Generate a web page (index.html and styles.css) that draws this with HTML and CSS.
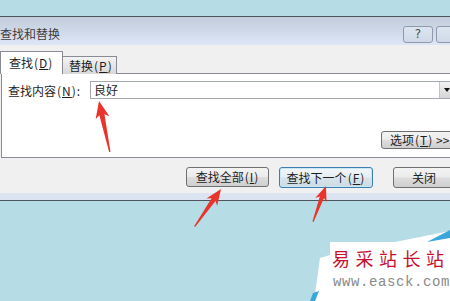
FILE: index.html
```html
<!DOCTYPE html>
<html lang="zh-CN">
  <head>
    <meta charset="UTF-8" />
    <title>查找和替换</title>
    <link rel="stylesheet" href="styles.css">
  </head>
  <body>
    <div class="desk-top"></div>

    <!-- Dialog -->
    <div class="dialog">
      <div class="titlebar">
        <div class="title">查找和替换</div>
        <div class="title-buttons">
          <span class="cap-btn">?</span>
          <span class="cap-btn"></span>
        </div>
      </div>

      <div class="dialog-body">
        <div class="tabs">
          <div class="tab active">查找<span class="key">(<u>D</u>)</span></div>
          <div class="tab">替换<span class="key">(<u>P</u>)</span></div>
        </div>

        <div class="panel">
          <div class="find-row">
            <label class="find-label">查找内容<span class="key">(<u>N</u>)</span>:</label>
            <div class="combo">
              <span class="combo-text">良好</span>
              <span class="combo-drop"></span>
            </div>
          </div>
          <div class="options-row">
            <button class="btn btn-options">选项<span class="key">(<u>T</u>)</span> &gt;&gt;</button>
          </div>
        </div>

        <div class="actions">
          <button class="btn btn-all">查找全部<span class="key">(<u>I</u>)</span></button>
          <button class="btn btn-next">查找下一个<span class="key">(<u>F</u>)</span></button>
          <button class="btn btn-close">关闭</button>
        </div>
      </div>
      <div class="dialog-foot"></div>
    </div>

    <!-- Red arrows drawn over the screenshot -->
    <svg class="arrows" width="450" height="301" viewBox="0 0 450 301">
      <g fill="#e8342b">
        <polygon transform="translate(99,101) rotate(-12)" points="0,0 7,17 2.6,14 0.7,52 -0.7,52 -2.6,14 -7,17" />
        <polygon transform="translate(221,189) rotate(35)" points="0,0 6.5,16 2.4,13 0.6,46 -0.6,46 -2.4,13 -6.5,16" />
        <polygon transform="translate(326,186) rotate(20)" points="0,0 6,15 2.2,12 0.6,38 -0.6,38 -2.2,12 -6,15" />
      </g>
    </svg>

    <!-- Site watermark -->
    <div class="watermark">
      <svg class="wm-shape" width="140" height="72" viewBox="0 0 140 72">
        <polygon points="10,29 20,26 20,13 85,13 140,2 140,72 4,72" fill="#ffffff" />
        <polygon points="117,13 140,1 140,9" fill="#3aa7db" />
        <polygon points="0,72 3,64 9,62 5,72" fill="#3aa7db" />
      </svg>
      <div class="wm-name">易采站长站</div>
      <div class="wm-url">www.easck.com</div>
    </div>
  </body>
</html>
```

FILE: styles.css
```css
/* Page */
body {
  margin: 0;
  width: 450px;
  height: 301px;
  overflow: hidden;
  position: relative;
  background: #b6dce6;
  font-family: "Noto Sans CJK SC", "Noto Sans", sans-serif;
  font-size: 12px;
  color: #1e1e1e;
}
.desk-top {
  height: 16px;
}

/* Dialog frame */
.dialog {
  width: 466px;
  border-top: 1px solid #4f555d;
  border-bottom: 1px solid #4f555d;
}
.titlebar {
  height: 28px;
  display: flex;
  background: linear-gradient(#c2cddb, #d0daea 55%, #dfe7f7);
}
.title {
  width: 408px;
  padding-top: 9px;
  color: #3d3d3d;
  line-height: 16px;
}
.title-buttons {
  display: flex;
  gap: 3px;
  margin-top: 9px;
}
.cap-btn {
  box-sizing: border-box;
  width: 30px;
  height: 17px;
  border: 1px solid #8e9aab;
  border-radius: 3px;
  background: linear-gradient(#dde5f0, #cfd9e7);
  color: #505050;
  font-family: "DejaVu Sans", sans-serif;
  font-size: 12px;
  line-height: 15px;
  text-align: center;
}
.dialog-body {
  height: 148px;
  box-sizing: border-box;
  padding-top: 6px;
  background: #f0f0f0;
}
.dialog-foot {
  height: 7px;
  background: #dde4f1;
}

/* Tabs */
.tabs {
  display: flex;
  align-items: flex-end;
  height: 23px;
  margin-bottom: -1px;
  position: relative;
  z-index: 1;
}
.tab {
  box-sizing: border-box;
  width: 55px;
  height: 18px;
  margin-left: -1px;
  padding-left: 6px;
  border: 1px solid #898c95;
  border-bottom: none;
  background: linear-gradient(#f4f4f4, #e6e6e6 50%, #d8d8d8);
  line-height: 17px;
}
.tab.active {
  width: 63px;
  height: 23px;
  margin-left: 0;
  padding-left: 8px;
  background: #fff;
  line-height: 22px;
}
.key {
  letter-spacing: 1px;
  margin-left: 1px;
}

/* Panel */
.panel {
  box-sizing: border-box;
  height: 85px;
  margin-left: 1px;
  padding: 7px 10px 0 6px;
  border: 1px solid #898c95;
  background: #fff;
}
.find-row {
  display: flex;
  align-items: center;
}
.find-label {
  width: 82px;
}
.combo {
  flex: 1;
  box-sizing: border-box;
  height: 18px;
  display: flex;
  align-items: center;
  border: 1px solid #a3a8b0;
}
.combo-text {
  flex: 1;
  padding-left: 3px;
  line-height: 16px;
}
.combo-drop {
  width: 14px;
  height: 16px;
  display: flex;
  align-items: center;
  justify-content: center;
  background: linear-gradient(#f2f2f2, #d6d6d6);
  border-left: 1px solid #c4c4c4;
}
.combo-drop::after {
  content: "";
  border-left: 3.5px solid transparent;
  border-right: 3.5px solid transparent;
  border-top: 4px solid #111;
}
.options-row {
  display: flex;
  justify-content: flex-end;
  margin-top: 32px;
}

/* Buttons */
.btn {
  box-sizing: border-box;
  height: 21px;
  padding: 0;
  border: 1px solid #707070;
  border-radius: 3px;
  background: linear-gradient(#f3f3f3, #ebebeb 48%, #dddddd 52%, #cfcfcf);
  font-family: inherit;
  font-size: 12px;
  color: #1e1e1e;
  line-height: 18px;
}
.btn-options {
  width: 74px;
  height: 18px;
  padding-left: 8px;
  text-align: left;
  line-height: 16px;
}
.actions {
  display: flex;
  gap: 10px;
  margin-top: 9px;
  padding-left: 186px;
}
.btn-all {
  width: 83px;
  height: 20px;
}
.btn-next {
  width: 94px;
  border-color: #3c7fb1;
  background: linear-gradient(#f1f6f9, #e6eef3 48%, #d8e3ea 52%, #ccdbe4);
  box-shadow: inset 0 0 0 1px #c8e6f5;
}
.btn-close {
  width: 62px;
  margin-left: 10px;
}

/* Overlays */
.arrows {
  position: absolute;
  top: 0;
  left: 0;
}
.watermark {
  position: absolute;
  left: 310px;
  top: 229px;
  width: 140px;
  height: 72px;
}
.wm-shape {
  position: absolute;
  top: 0;
  left: 0;
}
.wm-name {
  position: relative;
  margin: 17px 0 0 22px;
  color: #c8102e;
  font-size: 18px;
  line-height: 24px;
  letter-spacing: 5.5px;
  white-space: nowrap;
}
.wm-url {
  position: relative;
  margin: 5px 0 0 23px;
  color: #8a8a8a;
  font-family: "Liberation Mono", monospace;
  font-size: 14px;
  line-height: 14px;
  letter-spacing: 0.6px;
  white-space: nowrap;
}
```
